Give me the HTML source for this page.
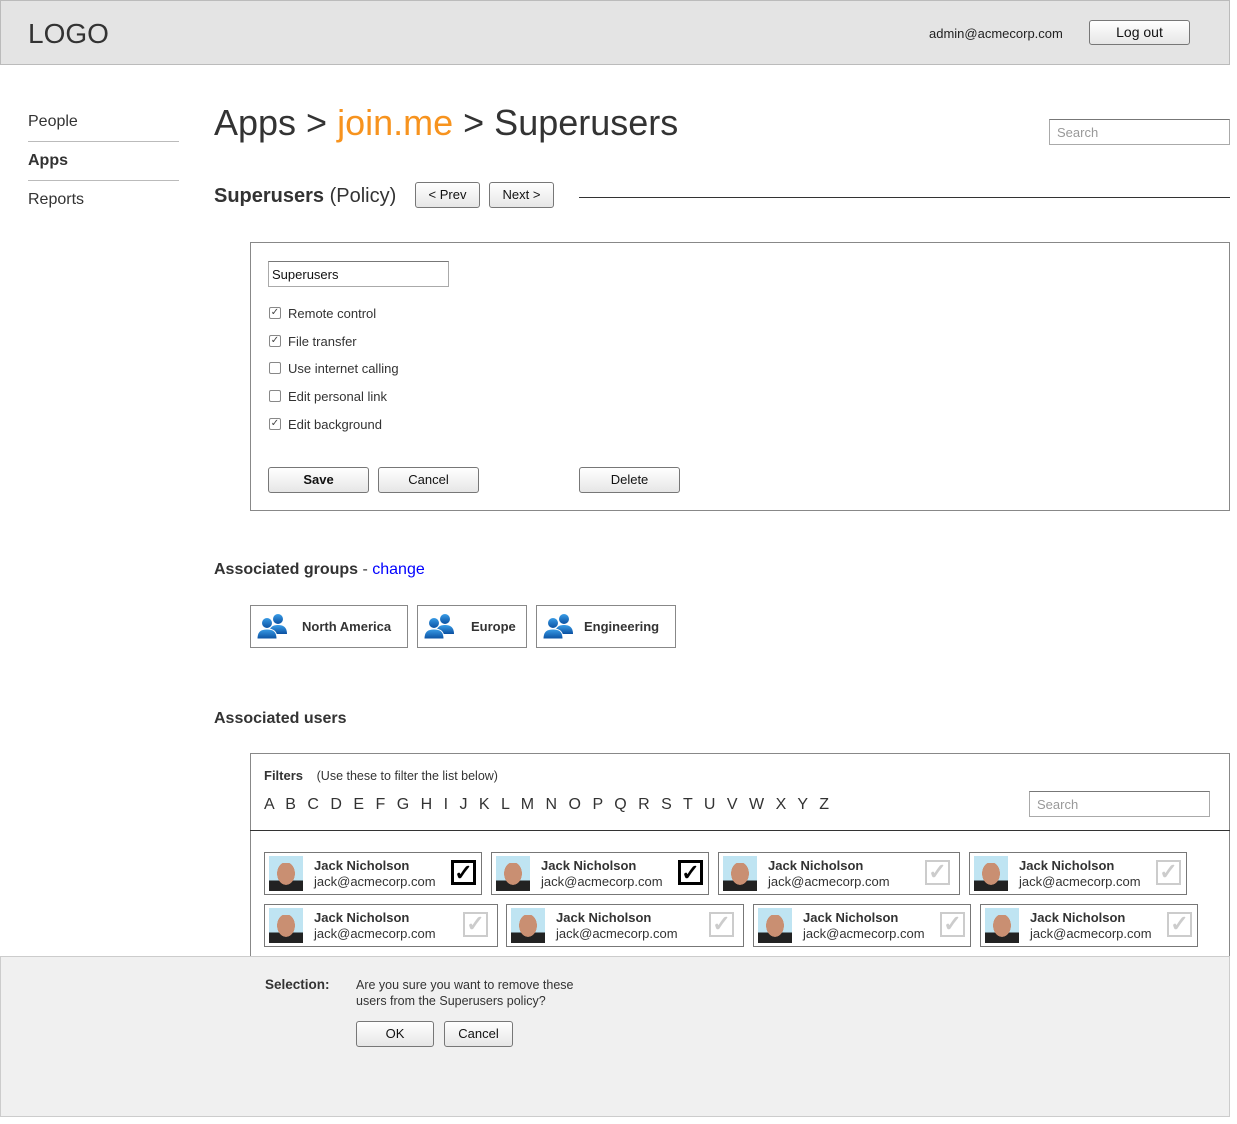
<!DOCTYPE html>
<html><head><meta charset="utf-8"><style>
*{margin:0;padding:0;box-sizing:border-box}
body{width:1237px;height:1124px;position:relative;background:#fff;font-family:"Liberation Sans",Arial,sans-serif;color:#333;overflow:hidden}
.a{position:absolute}
.btn{position:absolute;border:1px solid #777;border-radius:3px;background:linear-gradient(#fff,#e6e6e6);font-size:13px;text-align:center;color:#111}
.cb{position:absolute;width:12px;height:12px;border:1px solid #888;border-radius:2px;background:#fff;font-size:10px;line-height:10px;text-align:center;color:#444}
.lbl{position:absolute;font-size:13px;color:#333}
.grp{position:absolute;top:605px;height:43px;border:1px solid #888;font-size:13px;font-weight:bold;color:#333}
.card{position:absolute;height:43px;border:1px solid #777;background:#fff}
.card .ph{position:absolute;left:4px;top:3px;width:34px;height:35px;background:linear-gradient(#bfe4f2 0,#bfe4f2 20%,transparent 20%),radial-gradient(ellipse 11px 14px at 50% 50%,#c98f72 80%,transparent 82%),linear-gradient(#bfe4f2 70%,#222 70%)}
.card .n{position:absolute;left:49px;top:5px;font-size:13px;font-weight:bold;color:#333}
.card .e{position:absolute;left:49px;top:21px;font-size:13px;color:#333}
.card .k{position:absolute;top:7px;width:25px;height:25px;border:3px solid #000;font-size:22px;line-height:20px;text-align:center;font-weight:bold;color:#000}
.card .k.g{border-color:#ccc;color:#ccc;border-width:2px}
</style></head><body>
<div class="a" style="left:0;top:0;width:1230px;height:65px;background:#e4e4e4;border:1px solid #bbb"></div>
<div class="a" style="left:28px;top:18px;font-size:28px;color:#333">LOGO</div>
<div class="a" style="left:929px;top:26px;font-size:13px;color:#222">admin@acmecorp.com</div>
<div class="btn" style="left:1089px;top:20px;width:101px;height:25px;line-height:23px;font-size:14px">Log out</div>

<div class="a" style="left:28px;top:113px;font-size:16px">People</div>
<div class="a" style="left:28px;top:141px;width:151px;border-top:1px solid #bbb"></div>
<div class="a" style="left:28px;top:152px;font-size:16px;font-weight:bold">Apps</div>
<div class="a" style="left:28px;top:180px;width:151px;border-top:1px solid #bbb"></div>
<div class="a" style="left:28px;top:191px;font-size:16px">Reports</div>

<div class="a" style="left:214px;top:102px;font-size:36px;color:#333">Apps &gt; <span style="color:#f7931e">join.me</span> &gt; Superusers</div>
<div class="a" style="left:1049px;top:119px;width:181px;height:26px;border:1px solid #aaa;border-top-color:#777;font-size:13px;color:#999;padding:5px 7px">Search</div>

<div class="a" style="left:214px;top:185px;font-size:20px"><b>Superusers</b> (Policy)</div>
<div class="btn" style="left:415px;top:182px;width:65px;height:26px;line-height:24px">&lt; Prev</div>
<div class="btn" style="left:489px;top:182px;width:65px;height:26px;line-height:24px">Next &gt;</div>
<div class="a" style="left:579px;top:197px;width:651px;border-top:1px solid #333"></div>

<div class="a" style="left:250px;top:242px;width:980px;height:269px;border:1px solid #888"></div>
<div class="a" style="left:268px;top:261px;width:181px;height:26px;border:1px solid #aaa;border-top-color:#777;font-size:13px;color:#111;padding:5px 3px">Superusers</div>
<div class="cb" style="left:269px;top:307px">✓</div><div class="lbl" style="left:288px;top:306px">Remote control</div>
<div class="cb" style="left:269px;top:335px">✓</div><div class="lbl" style="left:288px;top:334px">File transfer</div>
<div class="cb" style="left:269px;top:362px"></div><div class="lbl" style="left:288px;top:361px">Use internet calling</div>
<div class="cb" style="left:269px;top:390px"></div><div class="lbl" style="left:288px;top:389px">Edit personal link</div>
<div class="cb" style="left:269px;top:418px">✓</div><div class="lbl" style="left:288px;top:417px">Edit background</div>
<div class="btn" style="left:268px;top:467px;width:101px;height:26px;line-height:24px;font-weight:bold">Save</div>
<div class="btn" style="left:378px;top:467px;width:101px;height:26px;line-height:24px">Cancel</div>
<div class="btn" style="left:579px;top:467px;width:101px;height:26px;line-height:24px">Delete</div>

<div class="a" style="left:214px;top:561px;font-size:16px"><b>Associated groups</b> - <span style="color:#00f">change</span></div>
<svg width="0" height="0" style="position:absolute"><defs><linearGradient id="bl" x1="0" y1="0" x2="0" y2="1"><stop offset="0" stop-color="#3a9ee8"/><stop offset="1" stop-color="#0a4fa0"/></linearGradient>
<symbol id="ppl" viewBox="0 0 36 28"><circle cx="22" cy="7" r="5" fill="url(#bl)"/><path d="M13 22c0-7 4-9 9-9s9 2 9 9z" fill="url(#bl)"/><circle cx="11" cy="11" r="5.5" fill="url(#bl)" stroke="#fff"/><path d="M1 27c0-8 4-10 10-10s10 2 10 10z" fill="url(#bl)" stroke="#fff"/></symbol></defs></svg>
<div class="grp" style="left:250px;width:158px"><svg class="a" style="left:5px;top:6px" width="36" height="28"><use href="#ppl"/></svg><span class="a" style="left:51px;top:13px">North America</span></div>
<div class="grp" style="left:417px;width:110px"><svg class="a" style="left:5px;top:6px" width="36" height="28"><use href="#ppl"/></svg><span class="a" style="left:53px;top:13px">Europe</span></div>
<div class="grp" style="left:536px;width:140px"><svg class="a" style="left:5px;top:6px" width="36" height="28"><use href="#ppl"/></svg><span class="a" style="left:47px;top:13px">Engineering</span></div>

<div class="a" style="left:214px;top:710px;font-size:16px;font-weight:bold">Associated users</div>
<div class="a" style="left:250px;top:753px;width:980px;height:210px;border:1px solid #888"></div>
<div class="a" style="left:250px;top:830px;width:980px;border-top:1px solid #333"></div>
<div class="a" style="left:264px;top:768px;font-size:13px"><b>Filters</b> <span style="font-size:12.5px;margin-left:10px">(Use these to filter the list below)</span></div>
<div class="a" style="left:264px;top:796px;font-size:16px;word-spacing:7px;color:#333">A B C D E F G H I J K L M N O P Q R S T U V W X Y Z</div>
<div class="a" style="left:1029px;top:791px;width:181px;height:26px;border:1px solid #aaa;border-top-color:#777;font-size:13px;color:#999;padding:5px 7px">Search</div>

<div class="card" style="left:264px;top:852px;width:218px"><div class="ph"></div><div class="n">Jack Nicholson</div><div class="e">jack@acmecorp.com</div><div class="k" style="left:186px">✓</div></div>
<div class="card" style="left:491px;top:852px;width:218px"><div class="ph"></div><div class="n">Jack Nicholson</div><div class="e">jack@acmecorp.com</div><div class="k" style="left:186px">✓</div></div>
<div class="card" style="left:718px;top:852px;width:242px"><div class="ph"></div><div class="n">Jack Nicholson</div><div class="e">jack@acmecorp.com</div><div class="k g" style="left:206px">✓</div></div>
<div class="card" style="left:969px;top:852px;width:218px"><div class="ph"></div><div class="n">Jack Nicholson</div><div class="e">jack@acmecorp.com</div><div class="k g" style="left:186px">✓</div></div>
<div class="card" style="left:264px;top:904px;width:234px"><div class="ph"></div><div class="n">Jack Nicholson</div><div class="e">jack@acmecorp.com</div><div class="k g" style="left:198px">✓</div></div>
<div class="card" style="left:506px;top:904px;width:238px"><div class="ph"></div><div class="n">Jack Nicholson</div><div class="e">jack@acmecorp.com</div><div class="k g" style="left:202px">✓</div></div>
<div class="card" style="left:753px;top:904px;width:218px"><div class="ph"></div><div class="n">Jack Nicholson</div><div class="e">jack@acmecorp.com</div><div class="k g" style="left:186px">✓</div></div>
<div class="card" style="left:980px;top:904px;width:218px"><div class="ph"></div><div class="n">Jack Nicholson</div><div class="e">jack@acmecorp.com</div><div class="k g" style="left:186px">✓</div></div>

<div class="a" style="left:0;top:956px;width:1230px;height:161px;background:#f0f0f0;border:1px solid #ccc"></div>
<div class="a" style="left:265px;top:977px;font-size:13.5px;font-weight:bold">Selection:</div>
<div class="a" style="left:356px;top:977px;font-size:12.5px;line-height:16px;color:#333">Are you sure you want to remove these<br>users from the Superusers policy?</div>
<div class="btn" style="left:356px;top:1021px;width:78px;height:26px;line-height:24px">OK</div>
<div class="btn" style="left:444px;top:1021px;width:69px;height:26px;line-height:24px">Cancel</div>
</body></html>
